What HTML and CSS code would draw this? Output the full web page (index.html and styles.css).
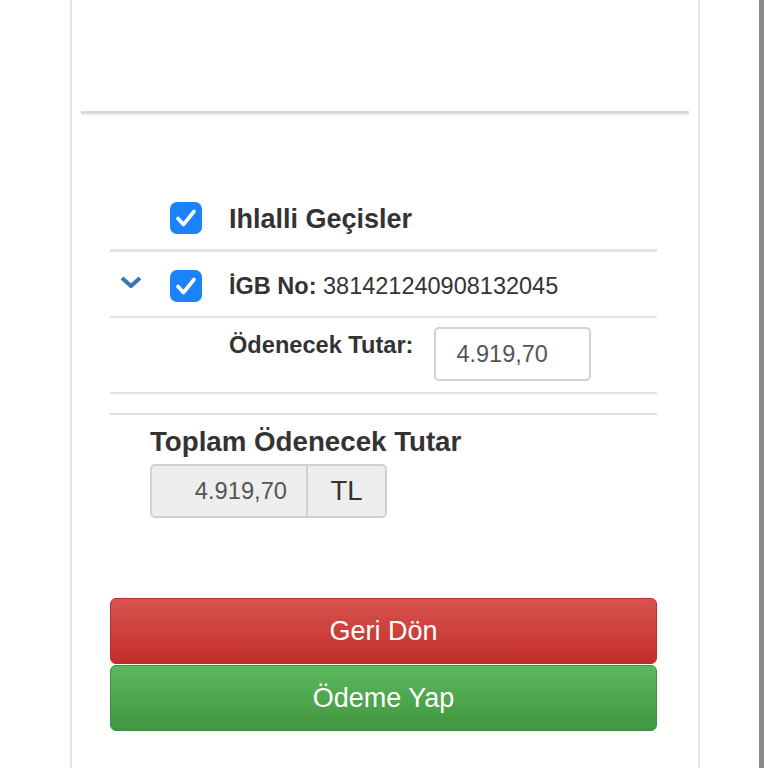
FILE: index.html
```html
<!DOCTYPE html>
<html lang="tr">
<head>
<meta charset="utf-8">
<title>Ödeme</title>
<link rel="stylesheet" href="styles.css">
</head>
<body>
<div class="page">
  <div class="panel">
    <div class="top-space"></div>
    <div class="hr"></div>
    <div class="content">
      <div class="row row-head">
        <svg class="check" viewBox="0 0 32 32" width="32" height="32"><rect x="0" y="0" width="32" height="32" rx="7" fill="#1a82fb"/><polyline points="8,16.5 13.5,22.5 24,9.5" fill="none" stroke="#fff" stroke-width="3.6" stroke-linecap="round" stroke-linejoin="round"/></svg>
        <span class="head-title">Ihlalli Geçisler</span>
      </div>
      <div class="row row-item">
        <svg class="chev" viewBox="0 0 22 12" width="22" height="12"><polyline points="2,2 11,10 20,2" fill="none" stroke="#3a77b2" stroke-width="4"/></svg>
        <svg class="check" viewBox="0 0 32 32" width="32" height="32"><rect x="0" y="0" width="32" height="32" rx="7" fill="#1a82fb"/><polyline points="8,16.5 13.5,22.5 24,9.5" fill="none" stroke="#fff" stroke-width="3.6" stroke-linecap="round" stroke-linejoin="round"/></svg>
        <span class="item-text"><b>İGB No:</b> 381421240908132045</span>
      </div>
      <div class="row row-amount">
        <span class="amount-label">Ödenecek Tutar:</span>
        <div class="amount-input">4.919,70</div>
      </div>
      <div class="sep"></div>
      <div class="total-title">Toplam Ödenecek Tutar</div>
      <div class="total-group">
        <div class="total-value">4.919,70</div>
        <div class="total-addon">TL</div>
      </div>
      <button class="btn btn-danger">Geri Dön</button>
      <button class="btn btn-success">Ödeme Yap</button>
    </div>
  </div>
  <div class="edge"></div>
</div>
</body>
</html>
```

FILE: styles.css
```css
html, body {
  margin: 0;
  padding: 0;
  background: #fff;
}
body {
  font-family: "Liberation Sans", Arial, Helvetica, sans-serif;
  color: #333;
}
.page {
  display: flex;
  height: 768px;
  overflow: hidden;
}
.panel {
  box-sizing: border-box;
  margin-left: 70px;
  width: 630px;
  height: 768px;
  border-left: 2px solid #e4e4e4;
  border-right: 2px solid #e4e4e4;
}
.edge {
  margin-left: 59px;
  width: 5px;
  height: 768px;
  background: #8a8a8a;
}
.top-space {
  height: 111px;
}
.hr {
  margin: 0 9px;
  height: 3px;
  background: #d9d9d9;
  box-shadow: 0 1px 2px rgba(0, 0, 0, 0.08);
}
.content {
  margin: 0 41px 0 38px;
}
.row {
  display: flex;
  align-items: center;
  box-sizing: border-box;
}
.check {
  display: block;
  flex: none;
}
.row-head {
  margin-top: 72px;
  height: 66px;
  padding-left: 60px;
  border-bottom: 3px solid #e2e2e2;
}
.head-title {
  margin-left: 27px;
  padding-top: 4px;
  font-size: 27px;
  font-weight: bold;
  color: #333;
}
.row-item {
  height: 66px;
  padding-left: 10px;
  padding-top: 4px;
  border-bottom: 2px solid #e4e4e4;
}
.chev {
  display: block;
  flex: none;
  margin-right: 28px;
  margin-top: -9px;
}
.item-text {
  margin-left: 27px;
  font-size: 23.5px;
  color: #333;
}
.item-text b {
  font-weight: bold;
}
.row-amount {
  height: 76px;
  align-items: flex-start;
  padding: 9px 0 0 119px;
  border-bottom: 2px solid #e4e4e4;
}
.amount-label {
  margin-top: 5px;
  font-size: 23.6px;
  font-weight: bold;
  color: #333;
}
.amount-input {
  box-sizing: border-box;
  margin-left: 21px;
  width: 157px;
  height: 54px;
  padding-left: 20px;
  border: 2px solid #d2d2d2;
  border-radius: 5px;
  font-size: 23.5px;
  line-height: 50px;
  color: #555;
  background: #fff;
}
.sep {
  margin-top: 19px;
  height: 2px;
  background: #e2e2e2;
}
.total-title {
  margin: 11px 0 0 40px;
  font-size: 27.7px;
  line-height: 32px;
  font-weight: bold;
  color: #333;
}
.total-group {
  display: flex;
  box-sizing: border-box;
  margin: 6px 0 0 40px;
  width: 237px;
  height: 54px;
  border: 2px solid #d0d0d0;
  border-radius: 5px;
  background: #eee;
}
.total-value {
  box-sizing: border-box;
  width: 156px;
  padding-right: 19px;
  text-align: right;
  font-size: 23.7px;
  line-height: 50px;
  color: #555;
  border-right: 2px solid #d0d0d0;
}
.total-addon {
  flex: 1;
  text-align: center;
  font-size: 27.5px;
  line-height: 50px;
  color: #333;
}
.btn {
  display: block;
  box-sizing: border-box;
  width: 100%;
  height: 66px;
  margin: 0;
  padding: 0;
  border-radius: 6px;
  font-family: "Liberation Sans", Arial, Helvetica, sans-serif;
  font-size: 27px;
  color: #fff;
  text-align: center;
}
.btn-danger {
  margin-top: 80px;
  background: linear-gradient(to bottom, #d9534f 0%, #c12e2a 100%);
  border: 1px solid #b92c28;
}
.btn-success {
  margin-top: 1px;
  background: linear-gradient(to bottom, #5cb85c 0%, #419641 100%);
  border: 1px solid #3e8f3e;
}
```
